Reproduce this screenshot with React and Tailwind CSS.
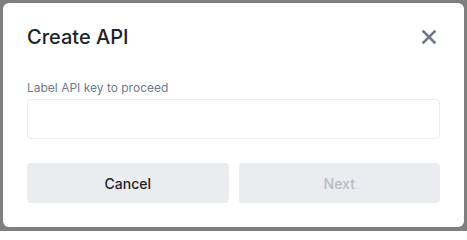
const CloseIcon = () => (
  <svg width="16" height="16" viewBox="0 0 16 16" fill="none">
    <path d="M2.5 2.5L13.5 13.5M13.5 2.5L2.5 13.5" stroke="#707A8A" strokeWidth="2.6" strokeLinecap="square" />
  </svg>
);

export default function App() {
  return (
    <div className="w-[467px] h-[231px] bg-[#7f7f7f] pt-[3px] pl-[3px] font-['Inter',sans-serif]">
      <div className="w-[461px] h-[224px] bg-white rounded-[6px] px-6 flex flex-col">
        <div className="flex items-center justify-between pt-5 h-[48px]">
          <h2 className="text-[20px] leading-[28px] font-medium text-[#1E2329]">Create API</h2>
          <button className="w-6 h-6 flex items-center justify-center -mr-[1px]" aria-label="close">
            <CloseIcon />
          </button>
        </div>
        <label htmlFor="api-label" className="mt-[29px] text-[12px] leading-4 text-[#707A8A]">
          Label API key to proceed
        </label>
        <input
          id="api-label"
          className="mt-[3px] h-10 w-full border border-[#EAECEF] rounded-[4px] outline-none px-3 text-sm"
        />
        <div className="mt-6 flex gap-[10px]">
          <button className="flex-1 h-10 rounded-[4px] bg-[#EAECEF] text-[14px] font-medium text-[#1E2329]">
            Cancel
          </button>
          <button className="flex-1 h-10 rounded-[4px] bg-[#EAECEF] text-[14px] font-medium text-[#B7BDC6]" disabled>
            Next
          </button>
        </div>
      </div>
    </div>
  );
}
